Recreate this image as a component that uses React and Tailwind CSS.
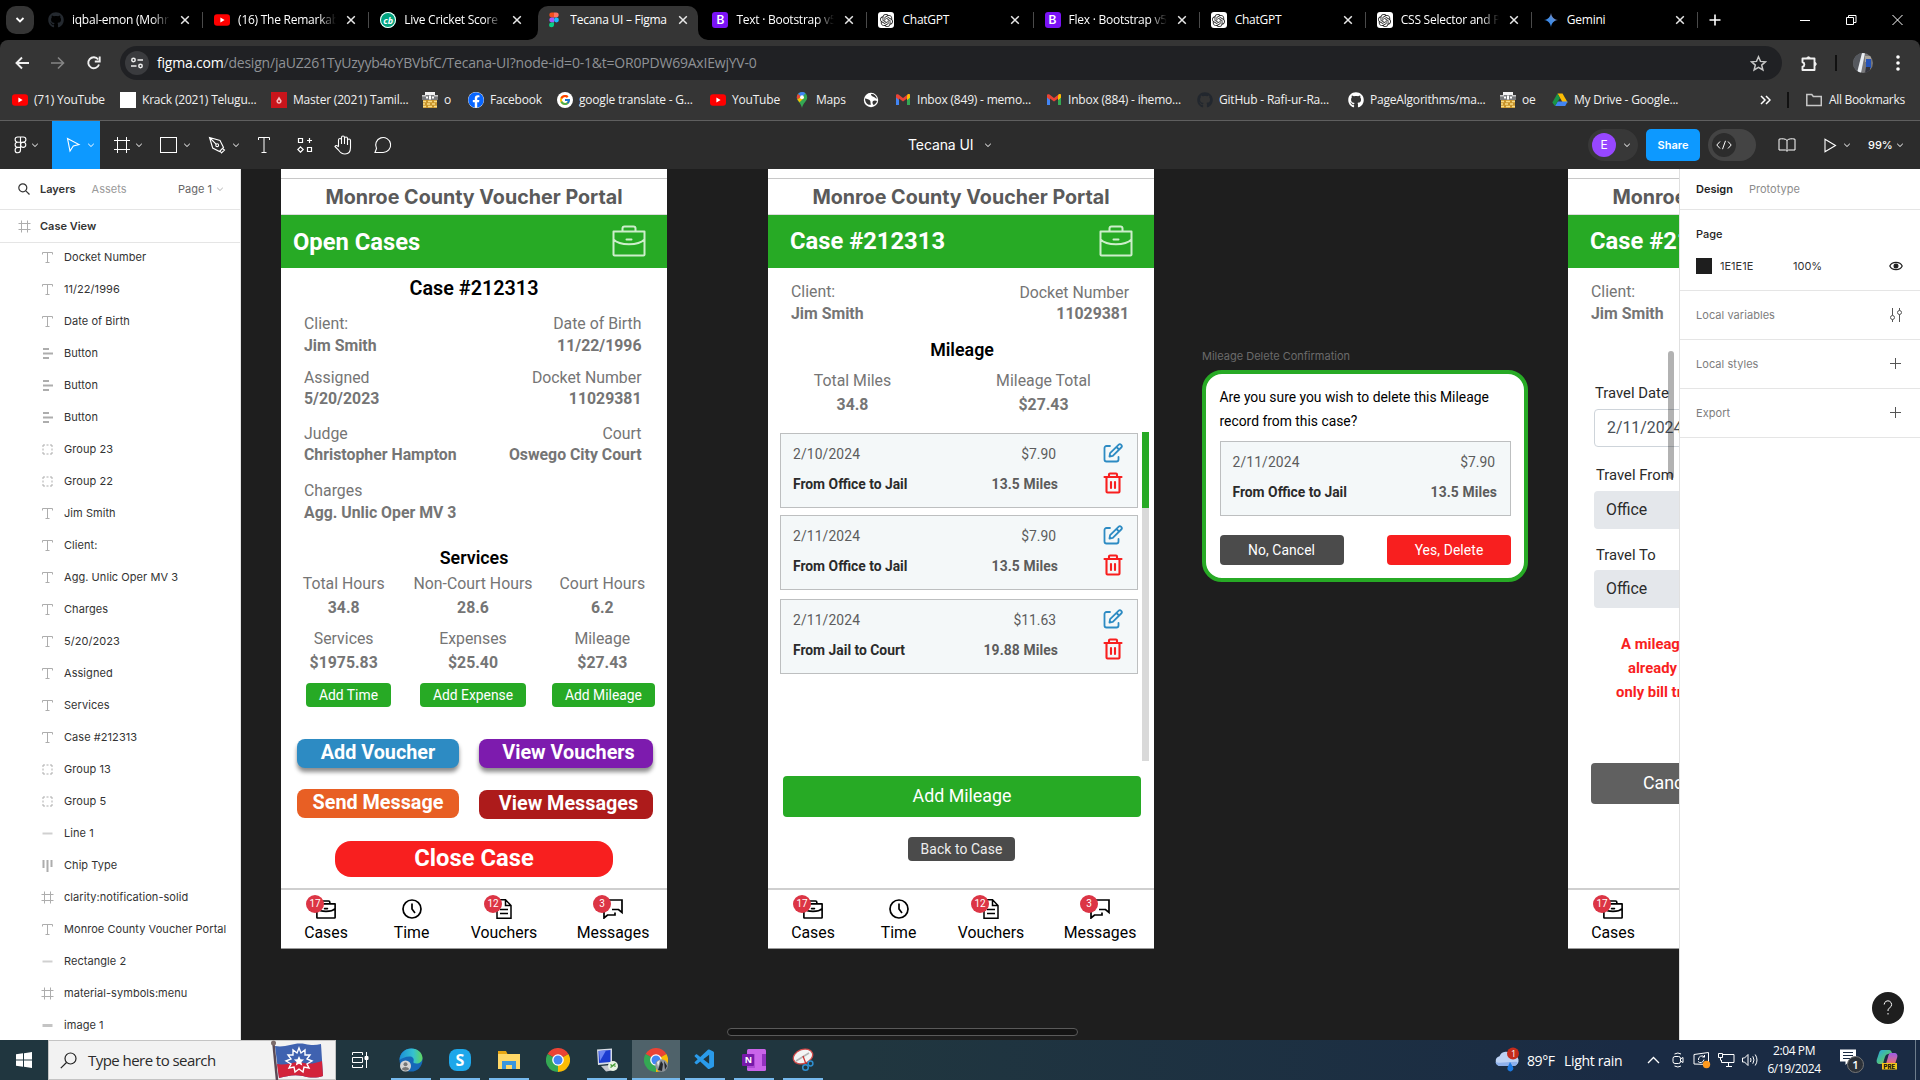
import React from "react";
import { FaGithub, FaFacebook } from "react-icons/fa";
import { SiOpenai } from "react-icons/si";
import { VscVscode } from "react-icons/vsc";
import { FcGoogle } from "react-icons/fc";

const UI = 'font-["Open_Sans",sans-serif]';

/* ---------- small brand marks ---------- */
const YouTube = () => (
  <svg width="16" height="16" viewBox="0 0 16 16"><rect x="0" y="2.2" width="16" height="11.6" rx="3" fill="#f00" /><path d="M6.4 5.5v5L10.6 8z" fill="#fff" /></svg>
);
const Cricbuzz = () => (
  <span className="flex size-4 items-center justify-center rounded-full bg-[#00a37f] text-[9px] font-bold italic leading-none text-white ring-1 ring-inset ring-white">cb</span>
);
const Figma = () => (
  <svg width="16" height="16" viewBox="0 0 16 16">
    <path d="M5.7.6H8v4.9H5.7a2.45 2.45 0 0 1 0-4.9z" fill="#f24e1e" /><path d="M8 .6h2.3a2.45 2.45 0 0 1 0 4.9H8z" fill="#ff7262" />
    <path d="M5.7 5.5H8v4.9H5.7a2.45 2.45 0 0 1 0-4.9z" fill="#a259ff" /><circle cx="10.4" cy="7.95" r="2.45" fill="#1abcfe" />
    <path d="M5.7 10.4H8v2.4a2.45 2.45 0 1 1-2.3-2.4z" fill="#0acf83" />
  </svg>
);
const Bootstrap = () => (
  <span className="flex size-4 items-center justify-center rounded-[3px] bg-[#7a12f5] font-['Inter',sans-serif] text-[12px] font-semibold leading-none text-white">B</span>
);
const GPT = () => <span className="flex size-4 items-center justify-center rounded-[3px] bg-white text-[#222]"><SiOpenai size={13} /></span>;
const Gemini = () => (
  <svg width="16" height="16" viewBox="0 0 16 16"><defs><linearGradient id="gem" x1="0" y1="1" x2="1" y2="0"><stop offset="0" stopColor="#1c7df0" /><stop offset=".55" stopColor="#4d8fe0" /><stop offset="1" stopColor="#b8798a" /></linearGradient></defs><path d="M8 1c.8 4.2 2.6 6.2 7 7-4.400.8-6.200 2.800-7 7-.8-4.200-2.600-6.200-7-7 4.400-.8 6.200-2.800 7-7z" fill="url(#gem)" /></svg>
);
const Gmail = () => (
  <svg width="16" height="16" viewBox="0 0 16 16"><path d="M1 4v9h3V7z" fill="#4285f4" /><path d="M15 4v9h-3V7z" fill="#34a853" /><path d="M12 4.500 15 3v2.500L12 8z" fill="#fbbc04" /><path d="M1 3.300C1 2 2.500 1.800 3.500 2.600L8 6l4.500-3.400C13.500 1.800 15 2 15 3.300L12 8V6.500L8 9.500 4 6.500V8L1 5.500z" fill="#ea4335" /><path d="M12 4v4l3-2.400V3.300c0-1.200-1.400-1.600-2.400-.8z" fill="#fbbc04" /></svg>
);
const Drive = () => (
  <svg width="16" height="16" viewBox="0 0 16 16"><path d="M5.500 1.500h5l5.200 9h-5z" fill="#fbbc04" /><path d="M3 14l2.600-4.500h10.100L13.200 14z" fill="#4285f4" /><path d="M5.500 1.500 8 6 3 14 .3 10.500z" fill="#1a9447" /></svg>
);
const Maps = () => (
  <svg width="16" height="16" viewBox="0 0 16 16"><path d="M8 0a5.200 5.200 0 0 0-5.200 5.200C2.800 9.500 7 10.500 8 16c1-5.500 5.200-6.500 5.200-10.800A5.200 5.200 0 0 0 8 0z" fill="#34a853" /><path d="M8 0a5.200 5.200 0 0 0-4 1.900L8 5.200l3.500-3.900A5 5 0 0 0 8 0z" fill="#4285f4" /><path d="M4 1.900A5.200 5.200 0 0 0 3.400 7.500L7 4.400z" fill="#ea4335" /><path d="M3.400 7.500 5.500 10.200 10 6 8 4z" fill="#fbbc04" /><circle cx="8" cy="5.200" r="1.900" fill="#fff" /></svg>
);
const Castle = () => (
  <svg width="16" height="16" viewBox="0 0 16 16"><path d="M1 8h14v8H1z" fill="#c9952c" /><path d="M3 0h10v3H3z" fill="#f2f2f2" /><path d="M0 3h16v5H0z" fill="#77797c" /><path d="M0 3h4v1.500H0zM12 3h4v1.500h-4z" fill="#c9c9c9" /><path d="M4 4.500h2v2H4zM7 3.500h2v4H7zM10 4.500h2v2h-2z" fill="#fff" /><path d="M1 9.500h3M6 9.500h4M12 9.500h3M1 12h2M5 12h3M10 12h3M1 14.500h3M6 14.500h4M12 14.500h3" stroke="#f8dc86" strokeWidth="1.300" /></svg>
);
const Globe = () => (
  <svg width="16" height="16" viewBox="0 0 16 16"><circle cx="8" cy="8" r="7.200" fill="#fff" /><path d="M2 6.500c2 .5 4 .5 5 2s0 2 1 4c-3 1.500-6-2-6-6zM8 2c0 2 1.500 2.500 3 3s2 2 3 1.500C13 3.500 10.500 1.500 8 2zM10 9c1.500-1 3-.5 4 0-.5 2-2 3.500-3.500 4-1-1-1.500-3-.5-4z" fill="#353535" /></svg>
);
const Master = () => <span className="flex size-4 items-center justify-center bg-[#c9151b] text-white"><svg width="8" height="8" viewBox="0 0 8 8"><path d="M4 .5 6.500 4.500A2.600 2.600 0 1 1 1.500 4.500z" fill="#f6b9bb" /><circle cx="4" cy="5.200" r="1" fill="#c9151b" /></svg></span>;

const Chevron = ({ className = "", size = 8 }) => (
  <svg className={className} width={size} height={size} viewBox="0 0 8 8" fill="none" stroke="currentColor"><path d="M1.200 2.800 4 5.500l2.800-2.700" /></svg>
);
const Cross = () => (
  <svg width="10" height="10" viewBox="0 0 10 10" stroke="#e8e8e8" strokeWidth="1.500"><path d="M1.200 1.200l7.600 7.600M8.800 1.200 1.200 8.800" /></svg>
);

/* ---------- browser chrome ---------- */
const tabs = [
  { icon: <FaGithub size={16} color="#24292f" />, t: "iqbal-emon (Mohr", fade: true, sep: true },
  { icon: <YouTube />, t: "(16) The Remarkab", fade: true, sep: true },
  { icon: <Cricbuzz />, t: "Live Cricket Score", fade: true },
  { icon: <Figma />, t: "Tecana UI – Figma", active: true },
  { icon: <Bootstrap />, t: "Text · Bootstrap v5", fade: true, sep: true },
  { icon: <GPT />, t: "ChatGPT", sep: true },
  { icon: <Bootstrap />, t: "Flex · Bootstrap v5", fade: true, sep: true },
  { icon: <GPT />, t: "ChatGPT", sep: true },
  { icon: <GPT />, t: "CSS Selector and P", fade: true, sep: true },
  { icon: <Gemini />, t: "Gemini", sep: true },
];

function TabStrip() {
  return (
    <div className="flex h-10 bg-black text-white">
      <div className="ml-1.5 mt-1.5 flex size-7 shrink-0 items-center justify-center rounded-[10px] bg-[#353535]">
        <svg width="10" height="10" viewBox="0 0 10 10" fill="none" stroke="#fff" strokeWidth="1.800"><path d="M1.500 3 5 6.500 8.500 3" /></svg>
      </div>
      <div className="ml-[3px] flex">
        {tabs.map((x, i) => (
          <div key={i} className="relative flex h-10 w-[166.100px] items-center pl-[11px]">
            {x.active && (
              <>
                <span className="absolute bottom-0 left-[3px] right-[3px] top-1.5 rounded-t-[10px] bg-[#353535]" />
                <svg className="absolute -left-[7px] bottom-0" width="10" height="10" viewBox="0 0 10 10"><path d="M10 0v10H0A10 10 0 0 0 10 0z" fill="#353535" /></svg>
                <svg className="absolute -right-[7px] bottom-0" width="10" height="10" viewBox="0 0 10 10"><path d="M0 0v10h10A10 10 0 0 1 0 0z" fill="#353535" /></svg>
              </>
            )}
            <span className="relative flex size-4 items-center justify-center">{x.icon}</span>
            <span className={"relative ml-2 w-[98px] overflow-hidden whitespace-nowrap text-[12px] tracking-[-0.25px] leading-5 " + (x.fade ? "[mask-image:linear-gradient(90deg,#000_82%,transparent)]" : "")}>{x.t}</span>
            <span className="relative ml-[10px]"><Cross /></span>
            {x.sep && <span className="absolute right-0 top-3 h-4 w-px bg-[#4a4a4a]" />}
          </div>
        ))}
      </div>
      <svg className="ml-[10px] mt-[13px]" width="14" height="14" viewBox="0 0 14 14" stroke="#fff" strokeWidth="1.600"><path d="M7 1.500v11M1.500 7h11" /></svg>
      <div className="ml-auto mt-[14px] flex h-3 gap-[35px] pr-[17px]">
        <svg width="11" height="12" viewBox="0 0 11 12" stroke="#fff"><path d="M0 6.500h10" /></svg>
        <svg width="11" height="12" viewBox="0 0 11 12" stroke="#fff" fill="none"><path d="M.5 3.500h7v7h-7zM2.500 3.500v-2h7.500v7H8" /></svg>
        <svg width="11" height="12" viewBox="0 0 11 12" stroke="#fff" fill="none"><path d="M.5 1l10 10M10.500 1l-10 10" /></svg>
      </div>
    </div>
  );
}

function AddressBar() {
  return (
    <div className="flex h-[46px] items-center rounded-t-lg pl-3.5">
      <svg width="16" height="16" viewBox="0 0 16 16" fill="none" stroke="#f0f0f0" strokeWidth="1.900"><path d="M15 8H3M8 2.500 2.500 8 8 13.500" /></svg>
      <svg className="ml-5" width="16" height="16" viewBox="0 0 16 16" fill="none" stroke="#858585" strokeWidth="1.600"><path d="M1 8h12M8 2.500 13.500 8 8 13.500" /></svg>
      <svg className="ml-5" width="16" height="16" viewBox="0 0 16 16" fill="none" stroke="#f0f0f0" strokeWidth="1.900"><path d="M13 9.500A5.500 5.500 0 1 1 12.200 4.500" /><path d="M13.700 1.500v5H8.800" fill="none" /></svg>
      <div className="ml-[18px] flex h-[34px] w-[1662px] items-center rounded-full bg-[#202124] pl-[5px]">
        <span className="flex size-6 items-center justify-center rounded-full bg-[#3a3b3e]">
          <svg width="14" height="14" viewBox="0 0 14 14" fill="none" stroke="#eee" strokeWidth="1.500"><circle cx="3.500" cy="4" r="1.700" /><path d="M7.500 4H13M1 10h5.500" /><circle cx="10.500" cy="10" r="1.700" /></svg>
        </span>
        <span className="ml-2 whitespace-nowrap pb-px text-[14px] tracking-[-0.21px] text-[#8f9296]"><span className="text-white">figma.com</span>/design/jaUZ261TyUzyyb4oYBVbfC/Tecana-UI?node-id=0-1&amp;t=OR0PDW69AxIEwjYV-0</span>
        <svg className="ml-auto mr-[15px]" width="17" height="17" viewBox="0 0 17 17" fill="none" stroke="#c7c7c7" strokeWidth="1.500"><path d="M8.500 1.800l2 4.600 5 .4-3.800 3.300 1.200 4.900-4.400-2.600-4.400 2.600 1.200-4.900L1.500 6.800l5-.4z" /></svg>
      </div>
      <svg className="ml-[18px]" width="19" height="19" viewBox="0 0 19 19" fill="none" stroke="#f0f0f0" strokeWidth="1.900"><path d="M2.500 4.500H14.500V16H2.500V12.800a2.300 2.300 0 0 0 0-4.500z" strokeLinejoin="round" /><path d="M6.800 4.500a1.700 1.700 0 0 1 3.400 0zM14.500 8.300a1.700 1.700 0 0 1 0 3.400z" fill="#f0f0f0" strokeWidth="1" /></svg>
      <span className="ml-[16px] h-4 w-0.5 bg-[#111]" />
      <svg className="ml-[16px] rounded-full" width="20" height="20" viewBox="0 0 20 20"><path d="M0 0h20v20H0z" fill="#77777a" /><path d="M0 0h9L4 20H0z" fill="#55585e" /><path d="M9 0h3L8 20H4z" fill="#e9edf2" /><path d="M12 3h6v6h-6z" fill="#a9a49c" /><path d="M13 6h5v9h-5z" fill="#2553b8" /><path d="M13 14h4v6h-5z" fill="#33333b" /></svg>
      <svg className="ml-[23px]" width="4" height="16" viewBox="0 0 4 16" fill="#fff"><circle cx="2" cy="2" r="1.800" /><circle cx="2" cy="8" r="1.800" /><circle cx="2" cy="14" r="1.800" /></svg>
    </div>
  );
}

const marks = [
  [<YouTube />, "(71) YouTube", "w-[70px]"],
  [<span className="size-4 bg-white" />, "Krack (2021) Telugu...", "w-[113px]"],
  [<Master />, "Master (2021) Tamil...", "w-[113px]"],
  [<Castle />, "o", "w-[8px]"],
  [<FaFacebook size={16} color="#0866ff" className="rounded-full bg-white" />, "Facebook", "w-[51px]"],
  [<span className="flex size-4 items-center justify-center rounded-full bg-white"><FcGoogle size={12} /></span>, "google translate - G...", "w-[115px]"],
  [<YouTube />, "YouTube", "w-[46px]"],
  [<Maps />, "Maps", "w-[31px]"],
  [<Globe />, "", "w-0 -ml-1.5"],
  [<Gmail />, "Inbox (849) - memo...", "w-[113px]"],
  [<Gmail />, "Inbox (884) - ihemo...", "w-[113px]"],
  [<FaGithub size={16} color="#22272e" />, "GitHub - Rafi-ur-Ra...", "w-[113px]"],
  [<FaGithub size={16} color="#fff" />, "PageAlgorithms/ma...", "w-[114px]"],
  [<Castle />, "oe", "w-[14px]"],
  [<Drive />, "My Drive - Google...", "w-[107px]"],
];

function Bookmarks() {
  return (
    <div className="flex h-[34px] items-center pb-[6px] pl-3 text-[12px] tracking-[-0.2px] text-[#f1f1f1]">
      <div className="flex gap-4">
        {marks.map(([icon, t, w], i) => (
          <div key={i} className="flex items-center gap-1.5">
            <span className="flex size-4 shrink-0 items-center justify-center">{icon}</span>
            <span className={"whitespace-nowrap leading-5 " + w}>{t}</span>
          </div>
        ))}
      </div>
      <div className="ml-auto flex items-center pr-[14px]">
        <svg width="11" height="10" viewBox="0 0 11 10" fill="none" stroke="#fff" strokeWidth="1.500"><path d="M1 1l4 4-4 4M6 1l4 4-4 4" /></svg>
        <span className="ml-4 h-4 w-0.5 bg-[#111]" />
        <svg className="ml-[17px]" width="16" height="14" viewBox="0 0 16 14" fill="none" stroke="#c7c7c7" strokeWidth="1.500"><path d="M.8 12.500V1.500h5l1.500 2h8v9z" /></svg>
        <span className="ml-[7px] w-[77px] whitespace-nowrap tracking-[-0.32px]">All Bookmarks</span>
      </div>
    </div>
  );
}

/* ---------- design tool toolbar ---------- */
function Toolbar() {
  return (
    <div className="flex h-12 shrink-0 items-center bg-[#2c2c2c] font-['Inter',sans-serif] text-white">
      <div className="flex w-[52px] items-center pl-[14px]">
        <svg width="13" height="18" viewBox="0 0 13 18" fill="none" stroke="#fff" strokeWidth="1.100"><path d="M6.500 1H3.700a2.600 2.600 0 0 0 0 5.200h2.800zM6.500 1h2.800a2.600 2.600 0 0 1 0 5.200H6.500zM6.500 6.200H3.700a2.600 2.600 0 0 0 0 5.200h2.800zM6.500 11.400H3.700a2.700 2.700 0 1 0 2.800 2.700z" /><circle cx="9.200" cy="8.800" r="2.600" /></svg>
        <Chevron className="ml-1" />
      </div>
      <div className="flex h-12 w-12 items-center bg-[#0d99ff] pl-[14px]">
        <svg width="15" height="16" viewBox="0 0 15 16" fill="none" stroke="#fff" strokeWidth="1.100"><path d="M1.500 1.500 13 7.500 7.300 9 4 14z" /></svg>
        <Chevron className="ml-1.5" />
      </div>
      <svg className="ml-[13px]" width="18" height="18" viewBox="0 0 18 18" stroke="#fff" fill="none"><path d="M4.500 1v16M13.500 1v16M1 4.500h16M1 13.500h16" /></svg>
      <Chevron className="ml-1" />
      <span className="ml-[17px] h-4 w-[17px] border border-white" />
      <Chevron className="ml-[6px]" />
      <svg className="ml-[17px]" width="18" height="18" viewBox="0 0 18 18" fill="none" stroke="#fff" strokeWidth="1.100"><path d="M1.500 1.500 12 4.500l3.500 7-4 4L4.700 12zM1.500 1.500 8.300 8.300M14.500 12.500l2 1.500-3 3-1.500-2" /><circle cx="9.200" cy="9.200" r="1.400" /></svg>
      <Chevron className="ml-[6px]" />
      <svg className="ml-[17px]" width="14" height="18" viewBox="0 0 14 18" fill="none" stroke="#fff"><path d="M1.500 4V1.500h11V4M7 1.500v15M4.500 16.500h5" /></svg>
      <svg className="ml-[26px]" width="16" height="16" viewBox="0 0 16 16" fill="none" stroke="#fff" strokeWidth="1.200"><path d="M1.500 1.500h4v4h-4zM12.500 1v5M10 3.500h5M10.500 10.500h4v4h-4zM3.500 9.800l2.700 2.700-2.700 2.700-2.700-2.700z" /></svg>
      <svg className="ml-[20px]" width="20" height="20" viewBox="0 0 20 20" fill="none" stroke="#fff" strokeWidth="1.100"><path d="M5.500 11.500V5a1.500 1.500 0 0 1 3 0v4M8.500 9V2.500a1.500 1.500 0 0 1 3 0V9M11.500 3.500a1.500 1.500 0 0 1 3 0V10M14.500 5.500a1.500 1.500 0 0 1 3 0v7c0 4-2 6.500-5.500 6.500-3.500 0-5-1.500-6.500-4L2 11.500c.5-1.300 2-1.500 3.500.5" /></svg>
      <svg className="ml-[21px]" width="18" height="18" viewBox="0 0 18 18" fill="none" stroke="#fff" strokeWidth="1.100"><path d="M1 16.500h8a7.500 7.500 0 1 0-6.500-4z" /></svg>
      <span className="ml-[516px] text-[14px] tracking-[-0.1px] leading-5">Tecana UI</span>
      <Chevron className="ml-[11px]" />
      <div className="ml-auto flex items-center">
        <div className="flex h-8 w-[50px] items-center rounded-full bg-[#383838] pl-1">
          <span className="flex size-6 items-center justify-center rounded-full bg-[#9747ff] text-[12px]">E</span>
          <Chevron className="ml-[7px]" />
        </div>
        <span className="ml-2 flex h-8 w-[54px] items-center justify-center rounded-[5px] bg-[#0d99ff] text-[11px] font-semibold">Share</span>
        <div className="ml-2 flex h-8 w-12 items-center rounded-full bg-[#444] pl-1">
          <span className="flex size-6 items-center justify-center rounded-full bg-[#2c2c2c]">
            <svg width="16" height="10" viewBox="0 0 16 10" fill="none" stroke="#fff"><path d="M4 1.500.8 5 4 8.500M12 1.500 15.200 5 12 8.500M9.500.8l-3 8.400" /></svg>
          </span>
        </div>
        <svg className="ml-[22px]" width="18" height="14" viewBox="0 0 18 14" fill="none" stroke="#fff"><path d="M9 2.500C8 .8 4 .3 1 1.200V12h6.500L9 13.300 10.500 12H17V1.200C14 .3 10 .8 9 2.500zM9 2.500v10" /></svg>
        <svg className="ml-[28px]" width="13" height="15" viewBox="0 0 13 15" fill="none" stroke="#fff" strokeWidth="1.100"><path d="M1 1.200 11.500 7.500 1 13.800z" /></svg>
        <Chevron className="ml-[6px]" />
        <span className="ml-[17px] w-[25px] text-[11px] font-medium">99%</span>
        <Chevron className="ml-[3px] mr-4" />
      </div>
    </div>
  );
}

/* ---------- layer panel ---------- */
const layers = [
  ["T", "Docket Number"], ["T", "11/22/1996"], ["T", "Date of Birth"], ["A", "Button"], ["A", "Button"], ["A", "Button"],
  ["G", "Group 23"], ["G", "Group 22"], ["T", "Jim Smith"], ["T", "Client:"], ["T", "Agg. Unlic Oper MV 3"], ["T", "Charges"],
  ["T", "5/20/2023"], ["T", "Assigned"], ["T", "Services"], ["T", "Case #212313"], ["G", "Group 13"], ["G", "Group 5"],
  ["L", "Line 1"], ["C", "Chip Type"], ["F", "clarity:notification-solid"], ["T", "Monroe County Voucher Portal"],
  ["L", "Rectangle 2"], ["F", "material-symbols:menu"], ["I", "image 1"],
];
const layerPaths = {
  T: <path d="M1.500 3.500v-2h10v2M6.500 1.500v10M4.500 11.500h4" />,
  A: <path d="M2 2h6M2 6.500h10M2 11h6" strokeWidth="2" />,
  G: <path d="M2 4V2h2M5.500 2h2M9 2h2v2M11 5.500v2M11 9v2H9M7.500 11h-2M4 11H2V9M2 7.500v-2" />,
  L: <path d="M1.500 6.500h10" strokeWidth="2" stroke="#d0d0d0" />,
  I: <path d="M1.500 6.500h10" strokeWidth="3" stroke="#c4c4c4" />,
  C: <path d="M2.500 1v8M6.500 1v12M10.500 1v7" strokeWidth="2" />,
  F: <path d="M3.500.5v12M9.500.5v12M.5 3.500h12M.5 9.500h12" />,
};
const LayerIcon = ({ k }) => <svg width="13" height="13" viewBox="0 0 13 13" fill="none" stroke="#adadad">{layerPaths[k]}</svg>;

function Layers() {
  return (
    <aside className="flex w-[241px] shrink-0 flex-col overflow-hidden border-r border-[#e5e5e5] bg-white font-['Inter',sans-serif] text-[11px] text-[#333]">
      <div className="flex h-[41px] shrink-0 items-center border-b border-[#e5e5e5] pl-[18px]">
        <svg width="12" height="12" viewBox="0 0 12 12" fill="none" stroke="#333" strokeWidth="1.200"><circle cx="4.800" cy="4.800" r="4" /><path d="M7.800 7.800 11.500 11.500" /></svg>
        <span className="ml-[10px] font-semibold">Layers</span>
        <span className="ml-4 text-[#9a9a9a]">Assets</span>
        <span className="ml-auto text-[#666]">Page 1</span>
        <Chevron className="ml-1 mr-4 text-[#b3b3b3]" />
      </div>
      <div className="flex h-[33px] shrink-0 items-center border-b border-[#e5e5e5] pl-[18px]">
        <LayerIcon k="F" /><span className="ml-[9px] font-semibold">Case View</span>
      </div>
      <div className="-mt-[2px] tracking-[0.055px]">
        {layers.map(([k, t], i) => (
          <div key={i} className="flex h-8 items-center whitespace-nowrap pl-[41px]"><LayerIcon k={k} /><span className="ml-2.5">{t}</span></div>
        ))}
      </div>
    </aside>
  );
}

/* ---------- mobile frames ---------- */
const Briefcase = ({ w = 34, h = 32, c = "#cdeecb", sw = 2 }) => (
  <svg width={w} height={h} viewBox="0 0 34 32" fill="none" stroke={c} strokeWidth={sw} strokeLinejoin="round" strokeLinecap="round"><path d="M1.500 6.500h31v23a1 1 0 0 1-1 1h-29a1 1 0 0 1-1-1zM10.500 6V3.500a2 2 0 0 1 2-2h9a2 2 0 0 1 2 2V6M1.500 14.500c6 6.300 25 6.300 31 0M14.500 14.500h5" /></svg>
);

function Frame({ left, title, titleClass, children }) {
  return (
    <div className={"absolute top-0 flex h-[780px] w-[386px] flex-col overflow-hidden border-b border-[#999] bg-white font-['Roboto',sans-serif] text-[15.840px] text-[#757575] " + left}>
      <div className="h-[10px] shrink-0 border-b border-[#c8c8c8]" />
      <div className="flex h-9 shrink-0 items-center justify-center whitespace-nowrap border-b border-[#ddd] pt-[2px] font-['Inter',sans-serif] text-[19.700px] font-bold text-[#5a5a5a]">Monroe County Voucher Portal</div>
      <div className="flex h-[53px] shrink-0 items-center bg-[#27aa25]">
        <span className={"text-[23.760px] font-bold leading-8 text-white " + titleClass}>{title}</span>
        <span className="mb-0.5 ml-auto mr-[21px]"><Briefcase /></span>
      </div>
      <div className="flex-1">{children}</div>
      <BottomNav />
    </div>
  );
}

const NavItem = ({ n, icon, label, w }) => (
  <div className={"flex shrink-0 flex-col items-center " + w}>
    <span className="relative flex size-5 items-center justify-center">
      {icon}
      {n && <span className="absolute -left-[10px] -top-[4px] flex size-[18px] items-center justify-center rounded-full bg-[#dc3545] text-[10px] leading-none text-white">{n}</span>}
    </span>
    <span className="mt-1 leading-5 text-black">{label}</span>
  </div>
);

function BottomNav() {
  return (
    <div className="flex h-[60px] shrink-0 border-t-2 border-[#cfcfcf] pt-[9px]">
      <NavItem w="w-[90px]" n="17" label="Cases" icon={<Briefcase w={20} h={19} c="#000" sw={2.800} />} />
      <NavItem w="w-[81px]" label="Time" icon={<svg width="20" height="20" viewBox="0 0 20 20" fill="none" stroke="#000" strokeWidth="1.700"><circle cx="10" cy="10" r="9" /><path d="M10 4.500V10l3 4" /></svg>} />
      <NavItem w="w-[104px]" n="12" label="Vouchers" icon={<svg width="16" height="20" viewBox="0 0 16 20" fill="none" stroke="#000" strokeWidth="1.500"><path d="M1 .8h8.500L15 6.500v12.700H1zM9.500.8v5.700H15M4 10.500h8M4 14.500h8" /></svg>} />
      <NavItem w="w-[114px]" n="3" label="Messages" icon={<svg width="20" height="20" viewBox="0 0 20 20" fill="none" stroke="#000" strokeWidth="1.700"><path d="M3 7V1h16v12.500L15.500 10.500H9" /><path d="M5 10H1v9l3.500-3H12v-2.500" /></svg>} />
    </div>
  );
}

const Pair = ({ a, b, c, d, className }) => (
  <div className={"flex justify-between pl-[23px] pr-[25.500px] " + className}>
    <div>{a}<br /><b className="font-bold">{b}</b></div>
    <div className="text-right">{c}<br /><b className="font-bold">{d}</b></div>
  </div>
);
const Stat = ({ a, b }) => <div className="text-center leading-6">{a}<br /><b className="font-bold">{b}</b></div>;

function CaseFrame() {
  const small = "flex h-6 items-center justify-center rounded-[4px] bg-[#27aa25] text-[13.860px] text-white ";
  const big = "flex items-center justify-center text-[19.800px] font-bold text-white rounded-[8px] h-[29px] pb-px ";
  return (
    <Frame left="left-[40px]" title="Open Cases" titleClass="ml-[12px]">
      <div className="mt-[9px] text-center text-[19.800px] font-semibold leading-6 text-black">Case #212313</div>
      <Pair className="mt-[12px] leading-[22px]" a="Client:" b="Jim Smith" c="Date of Birth" d="11/22/1996" />
      <Pair className="mt-[10px] leading-[21px]" a="Assigned" b="5/20/2023" c="Docket Number" d="11029381" />
      <Pair className="mt-[14px] leading-[21px]" a="Judge" b="Christopher Hampton" c="Court" d="Oswego City Court" />
      <Pair className="mt-[15px] leading-[22px]" a="Charges" b="Agg. Unlic Oper MV 3" />
      <div className="mt-[22px] text-center text-[17.820px] font-semibold leading-6 text-black">Services</div>
      <div className="-ml-0.5 mt-[2px] grid w-[388px] grid-cols-3 gap-y-[7px]">
        <Stat a="Total Hours" b="34.8" /><Stat a="Non-Court Hours" b="28.6" /><Stat a="Court Hours" b="6.2" />
        <Stat a="Services" b="$1975.83" /><Stat a="Expenses" b="$25.40" /><Stat a="Mileage" b="$27.43" />
      </div>
      <div className="ml-[25px] mt-[8px] flex">
        <span className={small + "w-[85px]"}>Add Time</span><span className={small + "ml-[29px] w-[106px]"}>Add Expense</span><span className={small + "ml-[26px] w-[103px]"}>Add Mileage</span>
      </div>
      <div className="ml-4 mt-8 flex gap-5">
        <span className={big + "w-[162px] bg-[#2d8bc3] shadow-[0_4px_4px_rgba(0,0,0,.45)]"}>Add Voucher</span>
        <span className={big + "w-[174px] bg-[#7d1bae] pl-[5px] shadow-[0_4px_4px_rgba(0,0,0,.45)]"}>View Vouchers</span>
      </div>
      <div className="ml-4 mt-[21px] flex gap-5">
        <span className={big + "w-[162px] bg-[#e85f24]"}>Send Message</span>
        <span className={big + "mt-px w-[174px] bg-[#ad1b1b] pl-[5px]"}>View Messages</span>
      </div>
      <div className="ml-[54px] mt-[22px] flex h-9 w-[278px] items-center justify-center rounded-[16px] bg-[#f81f1f] text-[23.760px] font-bold text-white">Close Case</div>
    </Frame>
  );
}

const EditIcon = () => (
  <svg width="20" height="20" viewBox="0 0 20 20" fill="none" stroke="#2d8bc3" strokeWidth="1.800" strokeLinecap="round" strokeLinejoin="round"><path d="M7 3H3.500A2 2 0 0 0 1.500 5v11.500a2 2 0 0 0 2 2h10a2 2 0 0 0 2-2V14" /><path d="M6.500 13.500l.6-3.300L15.500 1.800a1.900 1.900 0 0 1 2.700 2.700L9.800 12.900zM13.500 4l2.500 2.500" /></svg>
);
const TrashIcon = () => (
  <svg width="20" height="22" viewBox="0 0 20 22" fill="none" stroke="#f81f1f" strokeWidth="2.100" strokeLinecap="round" strokeLinejoin="round"><path d="M1.500 5h17M3.500 5v14.500a1 1 0 0 0 1 1h11a1 1 0 0 0 1-1V5M6 5V2.500a1 1 0 0 1 1-1h6a1 1 0 0 1 1 1V5M8 10v6M12 10v6" /></svg>
);

const Trip = ({ date, cost, route, miles, actions, w, className }) => (
  <div className={"flex h-[75px] border border-[#bdbfc0] bg-[#f4f8f9] pl-3 text-[13.860px] text-[#5c5c5c] " + w + " " + className}>
    <div className="pt-[5px] leading-[30px]"><span className="tracking-[0.12px]">{date}</span><br /><b className="font-bold text-[#2b2b2b]">{route}</b></div>
    <div className="ml-auto pt-[5px] text-right leading-[30px]"><span className="pr-[2px]">{cost}</span><br /><b className="font-bold tracking-[0.1px]">{miles}</b></div>
    {actions && <div className="flex flex-col items-center gap-[9px] pl-[45px] pr-[14px] pt-[9px]"><EditIcon /><TrashIcon /></div>}
  </div>
);

function MileageFrame() {
  return (
    <Frame left="left-[527px]" title="Case #212313" titleClass="ml-[22px] -mt-[2px]">
      <div className="flex justify-between pl-[23px] pr-[25px] pt-[13px] leading-[22px]">
        <div>Client:<br /><b className="font-bold">Jim Smith</b></div>
        <div className="pt-px text-right leading-[21px]">Docket Number<br /><b className="font-bold">11029381</b></div>
      </div>
      <div className="mt-[13px] pl-[2px] text-center text-[17.820px] font-semibold leading-6 text-black">Mileage</div>
      <div className="-ml-[11px] mt-[7px] grid w-[382px] grid-cols-2"><Stat a="Total Miles" b="34.8" /><Stat a="Mileage Total" b="$27.43" /></div>
      <div className="ml-3 mt-[15px] flex">
        <div className="flex flex-col pt-[1px]">
          <Trip w="w-[358px]" className="" actions date="2/10/2024" cost="$7.90" route="From Office to Jail" miles="13.5 Miles" />
          <Trip w="w-[358px]" className="mt-[7px]" actions date="2/11/2024" cost="$7.90" route="From Office to Jail" miles="13.5 Miles" />
          <Trip w="w-[358px]" className="mt-[9px]" actions date="2/11/2024" cost="$11.63" route="From Jail to Court" miles="19.88 Miles" />
        </div>
        <div className="ml-1 h-[329px] w-[7px] bg-[#d9d9d9]"><div className="h-[76px] bg-[#27aa25]" /></div>
      </div>
      <div className="ml-[15px] mt-[15px] flex h-[41px] w-[358px] items-center justify-center rounded-[4px] bg-[#27aa25] text-[17.820px] text-white">Add Mileage</div>
      <div className="ml-[140px] mt-5 flex h-6 w-[107px] items-center justify-center rounded-[4px] bg-[#4b4b4b] text-[13.860px] tracking-[0.1px] text-[#eee]">Back to Case</div>
    </Frame>
  );
}

function EntryFrame() {
  return (
    <Frame left="left-[1327px]" title="Case #212313" titleClass="ml-[22px] -mt-[2px]">
      <div className="pl-[23px] pt-[13px] leading-[22px]">Client:<br /><b className="font-bold">Jim Smith</b></div>
      <div className="ml-[26px] mt-[58px] text-[#2b2b2b]">
        <div className="pl-px text-[14.850px] leading-5">Travel Date</div>
        <div className="mt-[6px] flex h-[38px] items-center rounded-[4px] border border-[#ced4da] pl-3 text-[#495057]">2/11/2024</div>
        <div className="mt-[18px] pl-0.5 text-[14.850px] leading-5">Travel From</div>
        <div className="mt-[6px] flex h-[38px] items-center rounded-[4px] bg-[#e4e7eb] pl-3">Office</div>
        <div className="mt-[16px] pl-0.5 text-[14.850px] leading-5">Travel To</div>
        <div className="mt-[5px] flex h-[38px] items-center rounded-[4px] bg-[#e4e7eb] pl-3">Office</div>
      </div>
      <div className="mt-[24px] whitespace-nowrap text-[14.850px] font-bold leading-6 text-[#f81f1f]">
        <div className="pl-[53px]">A mileage record has</div><div className="pl-[60px]">already been added</div><div className="pl-[48px]">only bill travel once</div>
      </div>
      <div className="ml-[23px] mt-[59px] flex h-[41px] w-[160px] items-center rounded-[4px] bg-[#606060] pl-[52px] text-[17.820px] text-white">Cancel</div>
    </Frame>
  );
}

function DeleteDialog() {
  const btn = "flex h-[30px] w-[124px] items-center justify-center rounded-[4px] text-[13.860px] tracking-[0.1px] text-white ";
  return (
    <div className="absolute left-[961px] top-[178px] w-[326px]">
      <div className="font-['Inter',sans-serif] text-[11px] leading-[18px] text-[#6b6b6b]">Mileage Delete Confirmation</div>
      <div className="mt-[5px] h-[212px] rounded-[20px] border-4 border-[#27aa25] bg-white pl-[13.500px] pr-[13px] pt-[11px] font-['Roboto',sans-serif]">
        <div className="whitespace-nowrap text-[13.860px] leading-6 text-black">Are you sure you wish to delete this Mileage<br />record from this case?</div>
        <Trip className="mt-2 pr-[13px]" w="" date="2/11/2024" cost="$7.90" route="From Office to Jail" miles="13.5 Miles" />
        <div className="mt-[19px] flex justify-between"><span className={btn + "bg-[#4b4b4b]"}>No, Cancel</span><span className={btn + "bg-[#f81f1f]"}>Yes, Delete</span></div>
      </div>
    </div>
  );
}

function Canvas() {
  return (
    <main className="relative flex-1 overflow-hidden bg-[#1e1e1e]">
      <CaseFrame />
      <MileageFrame />
      <DeleteDialog />
      <EntryFrame />
      <span className="absolute left-[1427px] top-[182px] h-[128px] w-[6px] rounded-full bg-black/30" />
      <span className="absolute left-[486px] top-[859px] h-2 w-[351px] rounded-full border border-[#5a5a5a] bg-[#141414]" />
    </main>
  );
}

/* ---------- inspector ---------- */
const Plus = () => <svg width="12" height="12" viewBox="0 0 12 12" stroke="#555"><path d="M5.500 0v11M0 5.500h11" /></svg>;
function Inspector() {
  const row = "flex h-[49px] items-center border-b border-[#e5e5e5] pl-4 pr-[18px] text-[#7d7d7d] tracking-[0.05px] justify-between ";
  return (
    <aside className="relative w-[241px] shrink-0 border-l border-[#e0e0e0] bg-white font-['Inter',sans-serif] text-[11px] text-[#333]">
      <div className="flex h-[41px] items-center border-b border-[#e5e5e5] pl-4"><span className="font-semibold text-[#1e1e1e]">Design</span><span className="ml-4 text-[#8c8c8c]">Prototype</span></div>
      <div className="h-[81px] border-b border-[#e5e5e5] pl-4 pt-4">
        <div className="font-medium leading-4 text-[#1e1e1e]">Page</div>
        <div className="mt-4 flex items-center pr-[17px]">
          <span className="size-4 bg-[#1e1e1e]" /><span className="ml-2 w-[73px]">1E1E1E</span><span>100%</span>
          <svg className="ml-auto" width="14" height="10" viewBox="0 0 14 10" fill="none" stroke="#1e1e1e" strokeWidth="1.200"><path d="M.8 5C3 .2 11 .2 13.200 5 11 9.800 3 9.800.8 5z" /><circle cx="7" cy="5" r="1.900" fill="#1e1e1e" /></svg>
        </div>
      </div>
      <div className={row}>Local variables<svg width="13" height="14" viewBox="0 0 13 14" fill="none" stroke="#555"><path d="M3.500 0v7.500M3.500 11.500V14M10.500 0v2.500M10.500 6.500V14" /><circle cx="3.500" cy="9.500" r="2" /><circle cx="10.500" cy="4.500" r="2" /></svg></div>
      <div className={row}>Local styles<Plus /></div>
      <div className={row}>Export<Plus /></div>
      <span className="absolute bottom-4 right-4 flex size-8 items-center justify-center rounded-full bg-[#1e1e1e]">
        <svg width="10" height="16" viewBox="0 0 10 16" fill="none" stroke="#fff"><path d="M1.200 4.500a3.700 3.700 0 1 1 5.600 3.200C5.400 8.500 5 9.300 5 11M5 13v1.500" /></svg>
      </span>
    </aside>
  );
}

/* ---------- desktop taskbar ---------- */
const ChromeMark = ({ children }) => (
  <svg width="24" height="24" viewBox="0 0 24 24"><path d="M12 12 1.600 6A12 12 0 0 1 22.400 6z" fill="#ea4335" /><path d="M12 12 22.400 6A12 12 0 0 1 12 24z" fill="#fbbc04" /><path d="M12 12v12A12 12 0 0 1 1.600 6z" fill="#34a853" /><path d="M1.600 6 12 6h10.400L12 7z" fill="#ea4335" /><circle cx="12" cy="12" r="5.800" fill="#fff" /><circle cx="12" cy="12" r="4.500" fill="#4285f4" />{children}</svg>
);
const apps = [
  [<svg width="24" height="24" viewBox="0 0 24 24"><defs><linearGradient id="ed" x1="0" x2="1"><stop offset="0" stopColor="#1b8fd8" /><stop offset=".6" stopColor="#35c1d0" /><stop offset="1" stopColor="#5fd65f" /></linearGradient></defs><circle cx="12" cy="12" r="11.500" fill="#1668b8" /><path d="M.5 12C1 5 6 .5 12.500.5 19 .5 23.500 5 23.500 10c0 3.500-3 5.500-6 5.500-2.500 0-3.500-1-3-2 1-3-1-5-4-5-4 0-8 2-10 3.500z" fill="url(#ed)" /><circle cx="6.500" cy="18" r="5.500" fill="#d5d5d5" /><circle cx="6.500" cy="16.200" r="2" fill="#777" /><path d="M2.800 21.300c1-3 6.400-3 7.400 0a5.500 5.500 0 0 1-7.400 0z" fill="#777" /></svg>, true],
  [<span className="flex size-[22px] items-center justify-center rounded-[8px] bg-[#1ea7ea] text-[16px] font-bold leading-none text-white">S</span>, true],
  [<svg width="24" height="20" viewBox="0 0 24 20"><path d="M1 1h8l1.500 3H23v14H1z" fill="#e8a713" /><path d="M1 4h22v15H1z" fill="#ffd867" /><path d="M5 19v-8h14v8h-4v-4H9v4z" fill="#3a96dd" /></svg>, true],
  [<ChromeMark />, false],
  [<svg width="24" height="24" viewBox="0 0 24 24"><path d="M2 1.500 17 .5v15L3 17z" fill="#d8dde6" /><path d="M3.500 3 15.500 2v12L4 15z" fill="#1c3cd0" /><path d="M4 3l7-.5L5 13z" fill="#6c86f2" /><path d="M6 18l10-1 4 5-9 1.500z" fill="#c6c9cf" /><circle cx="18" cy="18" r="5" fill="#e9f3e4" /><path d="M15.500 16.500 17.500 18l-2 1.500M20.500 15.500l-2 1.500 2 1.500" stroke="#3f9b2f" strokeWidth="1.300" fill="none" /></svg>, true],
  [<ChromeMark><circle cx="17.500" cy="17.500" r="6.300" fill="#8f959c" /><path d="M14 22l3-9 2 3-1 7zM20 13l3 5-2 4z" fill="#23262b" /><path d="M13 14l3-2-2 7z" fill="#eee" /></ChromeMark>, true, true],
  [<VscVscode size={24} color="#2a9bea" />, true],
  [<svg width="24" height="22" viewBox="0 0 24 22"><rect x="5" y="0" width="19" height="22" rx="1.500" fill="#ca64ea" /><path d="M20 5h4v6h-4zM20 11h4v6h-4z" fill="#9332bf" /><rect x="5" y="5" width="8" height="14" fill="#ae4bd5" /><rect x="0" y="5" width="12" height="12" rx="1" fill="#7719aa" /><text x="2.800" y="14.200" fontSize="9" fontWeight="700" fill="#fff" fontFamily="Open Sans">N</text></svg>, true],
  [<svg width="24" height="24" viewBox="0 0 24 24"><ellipse cx="12" cy="8.500" rx="10" ry="7" transform="rotate(-20 12 8.500)" fill="#f4f4f4" stroke="#d04a4a" strokeWidth="1.300" /><path d="M5 13 18 5" stroke="#b5b5b5" strokeWidth="1.500" /><path d="M12 8l3 8" stroke="#c33" strokeWidth="1.300" /><circle cx="14.500" cy="19.500" r="2.800" fill="none" stroke="#2f8fd0" strokeWidth="1.500" /><circle cx="19.500" cy="15.500" r="2.400" fill="none" stroke="#2f8fd0" strokeWidth="1.500" /></svg>, true],
];

function Flag() {
  return (
    <svg width="54" height="40" viewBox="0 0 54 40">
      <path d="M2.500 4 6 40" stroke="#5b4a55" strokeWidth="2.500" /><circle cx="2.500" cy="3" r="2.500" fill="#7a6a6a" />
      <path d="M4 6c12 2 18-4 30-2 7 1.500 11 1 16 0l2 32c-6 2-13 2-20 0-9-2-16 0-24 2z" fill="#3f62b0" />
      <path d="M6 24c10 2 18-4 27-1 7 1.500 12 0 18-2l1 15c-6 2-13 2-20 0-9-2-16 0-24 2z" fill="#d3233b" />
      <path d="M28 8l2 5 4-3 0 5 5 0-3 4 5 2-5 3 2 4-5-1-1 5-4-3-4 3-1-5-5 1 2-4-5-3 5-2-3-4 5 0 0-5 4 3z" fill="none" stroke="#fff" strokeWidth="1.400" />
      <path d="M28 16l1.500 3.300 3.600.3-2.700 2.400.8 3.600-3.200-1.900-3.200 1.900.8-3.600-2.700-2.400 3.600-.3z" fill="#fff" />
    </svg>
  );
}

function Taskbar() {
  return (
    <footer className={"flex h-10 shrink-0 items-center bg-[linear-gradient(90deg,#20363f,#20363f_45%,#1a2b44_85%)] text-white " + UI}>
      <span className="flex w-12 justify-center"><svg width="16" height="16" viewBox="0 0 16 16" fill="#fff"><path d="M0 2.300 7 1.300V7.500H0zM8 1.200 16 0v7.500H8zM0 8.500h7v6.200l-7-1zM8 8.500h8V16l-8-1.200z" /></svg></span>
      <div className="flex h-10 w-[288px] items-center border border-[#c4c4c4] bg-[#f2f2f2] pl-[11px]">
        <svg width="17" height="17" viewBox="0 0 17 17" fill="none" stroke="#222" strokeWidth="1.200"><circle cx="10.500" cy="6.500" r="5.500" /><path d="M6.500 10.500.8 16.200" /></svg>
        <span className="ml-[11px] w-[128px] whitespace-nowrap text-[15px] tracking-[-0.550px] text-[#2b2b2b]">Type here to search</span>
        <span className="ml-auto mr-[10px]"><Flag /></span>
      </div>
      <span className="flex w-[51px] justify-center pr-[2px]">
        <svg width="17" height="16" viewBox="0 0 17 16" fill="none" stroke="#fff"><path d="M.5 3V.5h10V3M.5 5.500h10v5H.5zM.5 13v2.500h10V13M14.500 0v4M14.500 8v8" /><path d="M13 4.500h3v3h-3z" fill="#fff" /></svg>
      </span>
      <div className="flex gap-px">
        {apps.map(([icon, open, active], i) => (
          <span key={i} className={"relative flex h-10 w-12 items-center justify-center " + (active ? "bg-[#4f626a]" : "")}>
            {icon}
            {open && <span className={"absolute bottom-0 h-0.5 bg-[#76b9ed] " + (active ? "inset-x-0" : "inset-x-1")} />}
          </span>
        ))}
      </div>
      <div className="ml-auto flex items-center">
        <svg width="26" height="26" viewBox="0 0 26 26"><path d="M6 19a5 5 0 0 1-.5-9.800A7 7 0 0 1 18 8a5.500 5.500 0 0 1 2 11z" fill="#bcd2f5" /><path d="M6 19a5 5 0 0 1-4.500-4c4 2 16-1 22 0-.5 3-2 4-3.500 4z" fill="#8eb1ec" /><path d="M16 15l3 5a3 3 0 1 1-5.500.5z" fill="#1a78e0" /><circle cx="19" cy="6.500" r="6" fill="#c42b1c" /><text x="17" y="9.700" fontSize="9" fill="#fff" fontFamily="Open Sans">1</text></svg>
        <span className="ml-[7px] w-[28px] whitespace-nowrap text-[14px] tracking-[-0.400px]">89°F</span>
        <span className="ml-[9px] w-[59px] whitespace-nowrap text-[14px] tracking-[-0.300px]">Light rain</span>
        <svg className="ml-[24px]" width="13" height="8" viewBox="0 0 13 8" fill="none" stroke="#fff" strokeWidth="1.300"><path d="M1 7l5.500-5.500L12 7" /></svg>
        <svg className="ml-[12px]" width="12" height="16" viewBox="0 0 12 16" fill="none" stroke="#fff"><rect x="1" y="4.500" width="7.500" height="7" rx="2" /><path d="M8.500 7l2.500-1.500v5L8.500 9M2.500 2Q6 0 9 2M2.500 14Q6 16 9 14" /></svg>
        <svg className="ml-[9px]" width="18" height="18" viewBox="0 0 18 18" fill="none" stroke="#fff"><path d="M1 3.500 15.500 1.500v12L1 13z" /><path d="M5.500 9a3.500 3.500 0 0 1 6-3v-2M11.500 6h-2.200M11 8.500a3.500 3.500 0 0 1-6 2" /><circle cx="13.500" cy="13.500" r="3.700" fill="#ff9a1f" stroke="none" /></svg>
        <svg className="ml-[7px]" width="17" height="16" viewBox="0 0 17 16" fill="none" stroke="#fff"><path d="M5 2.500h11v8H3.500V8M8 14.500h6M10.500 10.500v4M.5 1.500h4v4h-4zM2.500 5.500v3" /></svg>
        <svg className="ml-[7px]" width="17" height="14" viewBox="0 0 17 14" fill="none" stroke="#fff"><path d="M.5 5h2L6 1.500v11L2.500 9h-2zM8.500 5q1 2 0 4M10.800 3.300q2.400 3.700 0 7.400M13.200 1.500q3.600 5.500 0 11" /></svg>
        <div className="ml-[7px] w-[56px] whitespace-nowrap text-center text-[12px] leading-[18px] tracking-[-0.400px]">2:04 PM<br />6/19/2024</div>
        <span className="relative ml-[17px] flex"><svg width="26" height="25" viewBox="0 0 26 25"><path d="M1 1.500h16v12H10L6.500 17v-3.500H1z" fill="#fff" /><path d="M4 4.500h10M4 7.500h10M4 10.500h7" stroke="#1a2b44" /><circle cx="16.500" cy="16.500" r="8" fill="#2c3138" stroke="#777" /><text x="13.300" y="20.700" fontSize="11.500" fontWeight="600" fill="#fff" fontFamily="Open Sans">1</text></svg></span>
        <svg className="ml-[11px]" width="22" height="22" viewBox="0 0 22 22"><defs><linearGradient id="cp" x1="0" x2="1" y1="0" y2="1"><stop offset="0" stopColor="#27a4e8" /><stop offset=".5" stopColor="#4ac08a" /><stop offset="1" stopColor="#e6b422" /></linearGradient><linearGradient id="cq" x1="0" x2="0" y1="0" y2="1"><stop offset="0" stopColor="#9b5de8" /><stop offset="1" stopColor="#f0706a" /></linearGradient></defs><path d="M6 1h7c2 0 2.500 1.500 3 3l-4 1c-2 0-3 2-4 6l-1 4H4c-3 0-4-2-3-5l2-6c.5-2 1.500-3 3-3z" fill="url(#cp)" /><path d="M15 4h3c3 0 4 2 3 5l-2 6H10l2-7c.5-2 1-4 3-4z" fill="url(#cq)" /><rect x="6" y="14" width="15" height="6.500" fill="#f5c518" /><text x="7.500" y="19.500" fontSize="6" fontWeight="800" fill="#111" fontFamily="Inter">PRE</text></svg>
        <span className="ml-[17px] mr-1 h-10 w-px bg-[#6e7d8c]" />
      </div>
    </footer>
  );
}

export default function App() {
  return (
    <div className="flex h-[1080px] w-[1920px] flex-col overflow-hidden bg-black">
      <header className={UI + " shrink-0"}>
        <TabStrip />
        <div className="h-[81px] rounded-t-lg border-b border-[#5f5f5f] bg-[#353535]"><AddressBar /><Bookmarks /></div>
      </header>
      <Toolbar />
      <div className="flex h-[871px] shrink-0"><Layers /><Canvas /><Inspector /></div>
      <Taskbar />
    </div>
  );
}
